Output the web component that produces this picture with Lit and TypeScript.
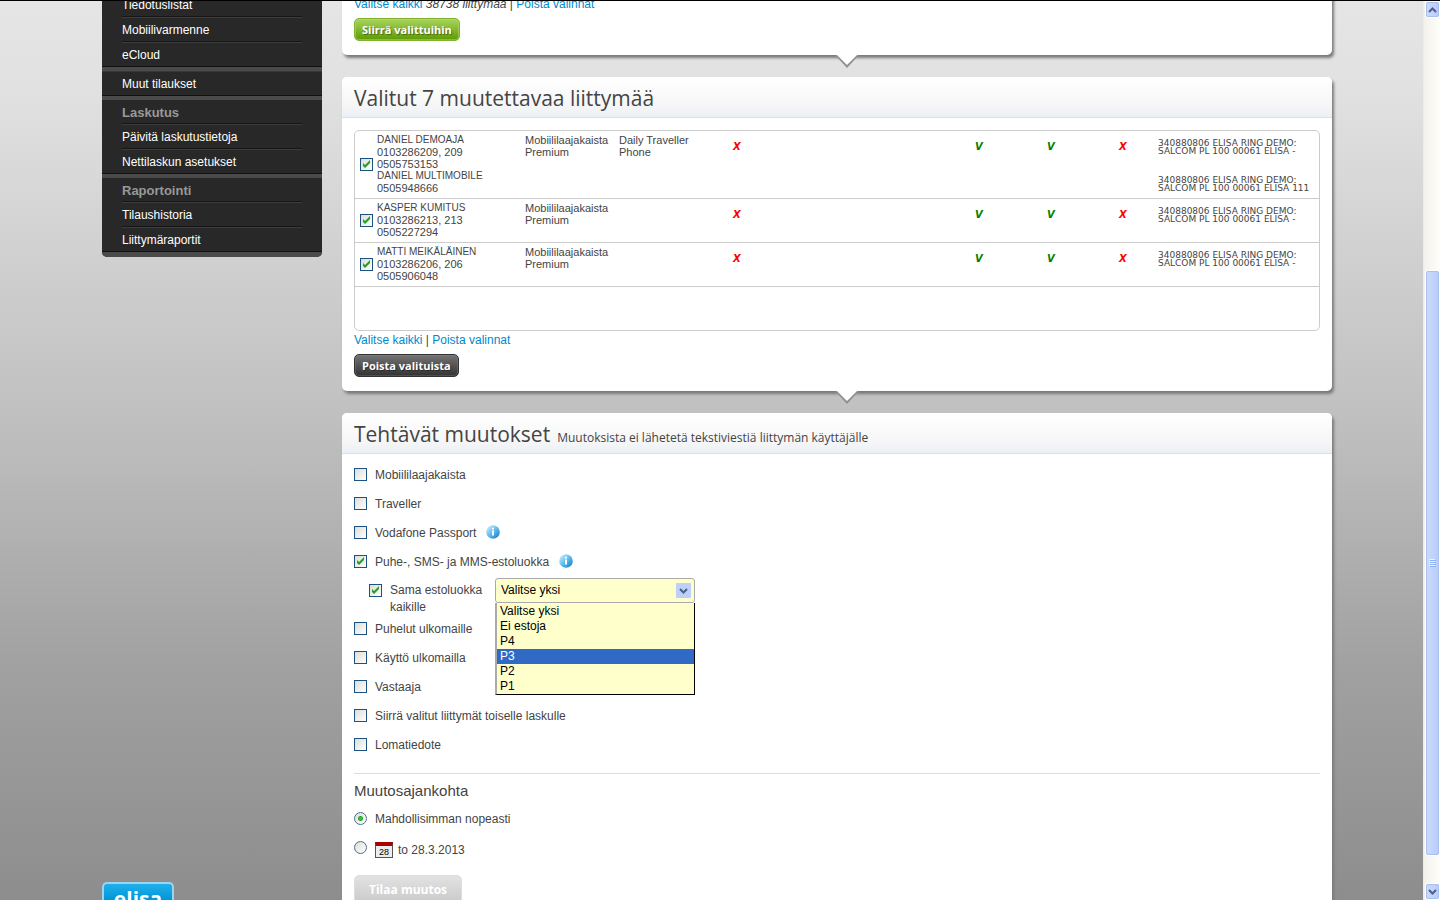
import { LitElement, html, css, svg } from "lit";
import { customElement, property, state } from "lit/decorators.js";
import { classMap } from "lit/directives/class-map.js";

interface NavGroup {
  title?: string;
  items: string[];
}

interface Account {
  lines: { text: string; name?: boolean }[];
  plan: string[];
  extra: string[];
  flags: boolean[];
  billing: string[][];
}

const NAV: NavGroup[] = [
  { items: ["Tiedotuslistat", "Mobiilivarmenne", "eCloud"] },
  { items: ["Muut tilaukset"] },
  { title: "Laskutus", items: ["Päivitä laskutustietoja", "Nettilaskun asetukset"] },
  { title: "Raportointi", items: ["Tilaushistoria", "Liittymäraportit"] },
];

const BILL = ["340880806 ELISA RING DEMO:", "SALCOM PL 100 00061 ELISA -"];

const ACCOUNTS: Account[] = [
  {
    lines: [
      { text: "DANIEL DEMOAJA", name: true },
      { text: "0103286209, 209" },
      { text: "0505753153" },
      { text: "DANIEL MULTIMOBILE", name: true },
      { text: "0505948666" },
    ],
    plan: ["Mobiililaajakaista", "Premium"],
    extra: ["Daily Traveller", "Phone"],
    flags: [false, true, true, false],
    billing: [BILL, ["340880806 ELISA RING DEMO:", "SALCOM PL 100 00061 ELISA 111"]],
  },
  {
    lines: [{ text: "KASPER KUMITUS", name: true }, { text: "0103286213, 213" }, { text: "0505227294" }],
    plan: ["Mobiililaajakaista", "Premium"],
    extra: [],
    flags: [false, true, true, false],
    billing: [BILL],
  },
  {
    lines: [{ text: "MATTI MEIKÄLÄINEN", name: true }, { text: "0103286206, 206" }, { text: "0505906048" }],
    plan: ["Mobiililaajakaista", "Premium"],
    extra: [],
    flags: [false, true, true, false],
    billing: [BILL],
  },
];

const LEVELS = ["Valitse yksi", "Ei estoja", "P4", "P3", "P2", "P1"];

const controls = css`
  * {
    box-sizing: border-box;
  }
  a {
    color: #0088cc;
    text-decoration: none;
  }
  input {
    appearance: none;
    flex: none;
    width: 13px;
    height: 13px;
    margin: 0;
    border: 1px solid #1c5180;
    background: linear-gradient(135deg, #dcdcd7, #ffffff);
  }
  input[type="checkbox"]:checked {
    background:
      url("data:image/svg+xml,%3Csvg xmlns='http://www.w3.org/2000/svg' viewBox='0 0 11 11'%3E%3Cpath d='M2 4v3l2 2 5-5V1L4 6z' fill='%2321a121'/%3E%3C/svg%3E"),
      linear-gradient(135deg, #dcdcd7, #ffffff);
  }
  input[type="radio"] {
    border-color: #4a7096;
    border-radius: 50%;
  }
  input[type="radio"]:checked {
    background: radial-gradient(circle, #3cc33c 0 1px, #21a121 2px, transparent 3px),
      linear-gradient(135deg, #dcdcd7, #ffffff);
  }
`;

@customElement("side-nav")
class SideNav extends LitElement {
  static styles = css`
    * {
      box-sizing: border-box;
    }
    :host {
      display: block;
      font: 12px/22px "Liberation Sans", Arial, sans-serif;
    }
    nav {
      overflow: hidden;
      border-radius: 0 0 5px 5px;
      background: #282828;
    }
    .group {
      padding: 0 20px 1px;
      border-bottom: 4px solid #4a4a4a;
      box-shadow: inset 0 -1px #111;
    }
    .group:last-child {
      border-bottom-width: 5px;
    }
    .single {
      border-top: 1px solid #383838;
    }
    .row {
      display: block;
      height: 23px;
      margin: 0;
      padding-top: 1px;
      color: #fff;
      text-decoration: none;
    }
    .row + .row {
      height: 25px;
      padding-top: 2px;
      border-top: 1px solid #161616;
      box-shadow: inset 0 1px #3c3c3c;
    }
    .title {
      color: #999;
      font-size: 13px;
      font-weight: bold;
      padding-top: 2px;
    }
  `;

  render() {
    return html`<nav aria-label="Valikko">
      ${NAV.map(
        (g) => html`<div class=${classMap({ group: true, single: !g.title && g.items.length === 1 })}>
          ${g.title ? html`<h3 class="row title">${g.title}</h3>` : ""}
          ${g.items.map((i) => html`<a class="row" href="#">${i}</a>`)}
        </div>`
      )}
    </nav>`;
  }
}

@customElement("info-icon")
class InfoIcon extends LitElement {
  static styles = css`
    :host {
      display: block;
      width: 14px;
      height: 14px;
    }
    svg {
      display: block;
    }
  `;
  render() {
    return html`<svg width="14" height="14" viewBox="0 0 14 14" role="img" aria-label="Lisätietoja">
      <defs>
        <linearGradient id="g" x1="0" y1="0" x2="1" y2="1">
          <stop offset="0" stop-color="#e2f4ff" />
          <stop offset="0.45" stop-color="#6cc1f0" />
          <stop offset="1" stop-color="#0877c4" />
        </linearGradient>
      </defs>
      <circle cx="7" cy="7" r="6.8" fill="url(#g)" />
      <path d="M6 2.800h2v1.800H6zM6 5.600h2v5H6z" fill="#fff" />
    </svg>`;
  }
}

@customElement("scroll-rail")
class ScrollRail extends LitElement {
  static styles = css`
    :host {
      display: flex;
      flex-direction: column;
      width: 17px;
      padding-left: 1px;
      border-left: 1px solid #eeede5;
      background: linear-gradient(90deg, #f3f1ec, #fefefb);
      box-sizing: border-box;
    }
    button,
    .thumb {
      box-sizing: border-box;
      width: 15px;
      padding: 0;
      border: 1px solid #fff;
      border-radius: 3px;
      outline: 1px solid #a9bfee;
      outline-offset: -2px;
      background: linear-gradient(90deg, #cbdaff, #b8ccfb);
    }
    button {
      height: 17px;
      display: grid;
      place-items: center;
    }
    .before {
      flex: 253;
    }
    .thumb {
      flex: 586;
      display: grid;
      place-items: center;
    }
    .after {
      flex: 27;
    }
    svg {
      display: block;
    }
  `;
  private arrow(up: boolean, label: string) {
    return html`<button aria-label=${label}>
      <svg width="9" height="6" viewBox="0 0 9 6">
        ${up
          ? svg`<path d="M1 5l3.500-3.500L8 5" fill="none" stroke="#4d6185" stroke-width="2" />`
          : svg`<path d="M1 1l3.500 3.500L8 1" fill="none" stroke="#4d6185" stroke-width="2" />`}
      </svg>
    </button>`;
  }
  render() {
    return html`${this.arrow(true, "Ylös")}
      <div class="before"></div>
      <div class="thumb">
        <svg width="7" height="8" viewBox="0 0 7 8">
          <path d="M0 .5h6M0 2.500h6M0 4.500h6M0 6.500h6" stroke="#eef4fe" />
          <path d="M1 1.500h6M1 3.500h6M1 5.500h6M1 7.500h6" stroke="#8cb0f8" />
        </svg>
      </div>
      <div class="after"></div>
      ${this.arrow(false, "Alas")}`;
  }
}

@customElement("content-panel")
class ContentPanel extends LitElement {
  @property() heading = "";
  @property() note = "";
  @property({ type: Boolean }) pointer = false;

  static styles = css`
    * {
      box-sizing: border-box;
    }
    :host {
      display: block;
      position: relative;
      border-radius: 5px;
      background: #fff;
      box-shadow: 2px 3px 3px #7a7a7a;
    }
    header {
      display: flex;
      align-items: baseline;
      gap: 7px;
      height: 41px;
      padding: 0 12px;
      border-bottom: 1px solid #dcdfe3;
      border-radius: 5px 5px 0 0;
      background: linear-gradient(#ffffff, #f6f6f7 70%, #ebf0f6);
      font-family: "Open Sans", "Noto Sans", sans-serif;
      line-height: 42px;
      color: #444;
    }
    h2 {
      margin: 0;
      font-size: 21px;
      font-weight: 400;
      line-height: 42px;
    }
    .note {
      font-size: 12px;
    }
    .body {
      padding: 12px 12px 14px;
    }
    .tip {
      position: absolute;
      top: 100%;
      left: 51%;
      display: block;
      transform: translateX(-50%);
    }
  `;

  render() {
    return html`${this.heading
        ? html`<header>
            <h2>${this.heading}</h2>
            ${this.note ? html`<span class="note">${this.note}</span>` : ""}
          </header>`
        : ""}
      <div class="body"><slot></slot></div>
      ${this.pointer
        ? html`<svg class="tip" width="26" height="14" viewBox="0 0 26 14" aria-hidden="true">
            <path d="M1 0h24L13 13z" fill="#909090" />
            <path d="M3 0h20L13 10z" fill="#fff" />
          </svg>`
        : ""}`;
  }
}

@customElement("account-table")
class AccountTable extends LitElement {
  static styles = [
    controls,
    css`
      :host {
        display: block;
        border: 1px solid #ccc;
        border-radius: 5px;
        font: 11px/12px "Liberation Sans", Arial, sans-serif;
        color: #444;
        overflow: hidden;
      }
      table {
        width: 100%;
        border-collapse: separate;
        border-spacing: 0;
        table-layout: fixed;
      }
      td {
        height: 44px;
        padding: 3px 0 4px;
        border-bottom: 1px solid #ccc;
        vertical-align: top;
      }
      tr:last-child td {
        height: 43px;
        border-bottom: 0;
      }
      .pick {
        width: 22px;
        padding-left: 5px;
        vertical-align: middle;
      }
      .pick input {
        display: block;
      }
      .who {
        width: 148px;
      }
      .plan {
        width: 94px;
      }
      .extra {
        width: 114px;
      }
      .flag {
        width: 72px;
        padding-top: 10px;
        font: italic bold 10px/12px "DejaVu Sans", Verdana, sans-serif;
        color: #008000;
      }
      .no {
        color: #f00;
      }
      .wide {
        width: 242px;
      }
      .narrow {
        width: 39px;
      }
      .line {
        display: block;
        white-space: nowrap;
      }
      .name {
        font-size: 10px;
      }
      .bill {
        padding-top: 8px;
        font: 9px/8px "DejaVu Sans", Verdana, sans-serif;
      }
      .block + .block {
        margin-top: 21px;
      }
    `,
  ];

  render() {
    const widths = ["wide", "", "", "narrow"];
    const line = (t: string) => html`<span class="line">${t}</span>`;
    return html`<table aria-label="Valitut liittymät">
      <tbody>
        ${ACCOUNTS.map(
          (a) => html`<tr>
            <td class="pick"><input type="checkbox" checked aria-label=${a.lines[0].text} /></td>
            <td class="who">
              ${a.lines.map((l) => html`<span class=${classMap({ line: true, name: !!l.name })}>${l.text}</span>`)}
            </td>
            <td class="plan">${a.plan.map(line)}</td>
            <td class="extra">${a.extra.map(line)}</td>
            ${a.flags.map((f, i) => html`<td class="flag ${widths[i]} ${f ? "" : "no"}">${f ? "V" : "X"}</td>`)}
            <td class="bill">${a.billing.map((b) => html`<div class="block">${b.map(line)}</div>`)}</td>
          </tr>`
        )}
        <tr>
          <td colspan="9"></td>
        </tr>
      </tbody>
    </table>`;
  }
}

@customElement("app-root")
class AppRoot extends LitElement {
  @state() private active = "P3";

  static styles = [
    controls,
    css`
      :host {
        display: flex;
        height: 100vh;
        border-top: 1px solid #000;
        box-sizing: border-box;
        overflow: hidden;
        font: 12px/18px "Liberation Sans", Arial, sans-serif;
        color: #444;
      }
      .page {
        flex: 1;
        min-width: 0;
        overflow: hidden;
        background: linear-gradient(#e6e5e6, #e2e1e2 10%, #c0c0c0 46%, #a0a0a0 75%, #8d8d8d);
      }
      .wrap {
        display: flex;
        gap: 20px;
        height: 100%;
        max-width: 1241px;
        margin: 0 auto;
        padding-left: 11px;
      }
      .side {
        display: flex;
        flex-direction: column;
        justify-content: space-between;
        flex: 0 0 220px;
      }
      side-nav {
        margin-top: -8px;
      }
      .logo {
        display: block;
        overflow: hidden;
        width: 72px;
        height: 18px;
        border: 2px solid #9bd3f0;
        border-bottom: 0;
        border-radius: 5px 5px 0 0;
        background: linear-gradient(#1fb0ea, #0294da);
        color: #fff;
        font: bold 21px/31px "Open Sans", sans-serif;
        text-align: center;
      }
      main {
        display: flex;
        flex: 1;
        flex-direction: column;
        gap: 22px;
        min-width: 0;
        margin-top: -18px;
      }
      p {
        margin: 0;
      }
      button {
        display: block;
        height: 23px;
        margin-top: 5px;
        padding: 0 7px;
        border: 1px solid #7fb52c;
        border-radius: 5px;
        background: linear-gradient(#aad55c, #5f9a04);
        box-shadow: inset 0 0 0 1px #b3d97388;
        color: #fff;
        font: bold 11px/20px "Open Sans", "Liberation Sans", sans-serif;
        text-shadow: 1px 1px 1px #0006;
      }
      .dark {
        border-color: #333;
        background: linear-gradient(#747474, #333);
        box-shadow: inset 0 0 0 1px #8885;
      }
      .muted {
        height: 29px;
        margin-top: 13px;
        padding: 0 14px;
        border-color: #ddd;
        background: linear-gradient(#e2e2e2, #cacaca);
        box-shadow: none;
        font-size: 12px;
        text-shadow: none;
      }
      .option {
        display: flex;
        align-items: center;
        height: 29px;
      }
      .option label {
        padding-left: 8px;
      }
      .option info-icon {
        margin: -2px 0 0 10px;
      }
      .sub {
        align-items: flex-start;
        height: 38px;
        padding-left: 15px;
        line-height: 17px;
      }
      .sub input {
        margin-top: 8px;
      }
      .sub label {
        width: 113px;
        padding-top: 6px;
      }
      .combo {
        position: relative;
        width: 200px;
        margin-top: 2px;
        color: #000;
      }
      select {
        display: block;
        appearance: none;
        width: 100%;
        height: 25px;
        padding: 0 5px;
        border: 1px solid #aaa;
        border-radius: 3px;
        background:
          url("data:image/svg+xml,%3Csvg xmlns='http://www.w3.org/2000/svg' viewBox='0 0 15 15'%3E%3Crect width='15' height='15' rx='1' fill='%23bdd0fb'/%3E%3Cpath d='M4 6l3.500 3.500L11 6' fill='none' stroke='%234d6185' stroke-width='2'/%3E%3C/svg%3E")
            right 3px center / 15px no-repeat,
          #ffffcc;
        color: #000;
        font: inherit;
      }
      .list {
        position: absolute;
        z-index: 1;
        top: 100%;
        left: 0;
        right: 0;
        margin: 0;
        padding: 1px 0 0;
        border: 1px solid #000;
        border-top: 0;
        border-left: 2px solid #aaa;
        background: #ffffcc;
        list-style: none;
        line-height: 15px;
      }
      .list li {
        padding-left: 3px;
      }
      .list .active {
        background: #316ac5;
        color: #fff;
      }
      .changes {
        margin-top: -6px;
        padding-bottom: 14px;
        border-bottom: 1px solid #ddd;
      }
      h3 {
        margin: 7px 0 3px;
        font-size: 15px;
        font-weight: 400;
        line-height: 20px;
      }
      .date {
        align-items: center;
        height: 29px;
      }
      .date label {
        display: flex;
        align-items: center;
        gap: 5px;
        padding-top: 4px;
      }
      .cal {
        width: 18px;
        height: 16px;
        border: 1px solid #555;
        border-top: 4px solid #a00;
        background: #eee;
        color: #000;
        font-size: 9px;
        line-height: 12px;
        text-align: center;
      }
    `,
  ];

  private option(id: string, label: string, checked = false, info = false) {
    return html`<div class="option">
      <input type="checkbox" id=${id} ?checked=${checked} /><label for=${id}>${label}</label>
      ${info ? html`<info-icon></info-icon>` : ""}
    </div>`;
  }

  render() {
    return html`<div class="page">
        <div class="wrap">
          <div class="side">
            <side-nav></side-nav>
            <a class="logo" href="#">elisa</a>
          </div>
          <main>
            <content-panel pointer>
              <p><a href="#">Valitse kaikki</a> <i>38738 liittymää</i> | <a href="#">Poista valinnat</a></p>
              <button>Siirrä valittuihin</button>
            </content-panel>
            <content-panel pointer heading="Valitut 7 muutettavaa liittymää">
              <account-table></account-table>
              <p><a href="#">Valitse kaikki</a> | <a href="#">Poista valinnat</a></p>
              <button class="dark">Poista valituista</button>
            </content-panel>
            <content-panel
              heading="Tehtävät muutokset"
              note="Muutoksista ei lähetetä tekstiviestiä liittymän käyttäjälle"
            >
              <div class="changes">
                ${this.option("mobile", "Mobiililaajakaista")} ${this.option("traveller", "Traveller")}
                ${this.option("passport", "Vodafone Passport", false, true)}
                ${this.option("barring", "Puhe-, SMS- ja MMS-estoluokka", true, true)}
                <div class="option sub">
                  <input type="checkbox" id="same" checked /><label for="same">Sama estoluokka kaikille</label>
                  <div class="combo">
                    <select aria-label="Estoluokka">
                      ${LEVELS.map((l) => html`<option>${l}</option>`)}
                    </select>
                    <ul class="list" role="listbox">
                      ${LEVELS.map(
                        (l) => html`<li
                          role="option"
                          class=${classMap({ active: l === this.active })}
                          @mouseenter=${() => (this.active = l)}
                        >
                          ${l}
                        </li>`
                      )}
                    </ul>
                  </div>
                </div>
                ${this.option("abroad", "Puhelut ulkomaille")} ${this.option("roaming", "Käyttö ulkomailla")}
                ${this.option("voicemail", "Vastaaja")} ${this.option("move", "Siirrä valitut liittymät toiselle laskulle")}
                ${this.option("holiday", "Lomatiedote")}
              </div>
              <h3>Muutosajankohta</h3>
              <div class="option">
                <input type="radio" name="when" id="asap" checked /><label for="asap">Mahdollisimman nopeasti</label>
              </div>
              <div class="option date">
                <input type="radio" name="when" id="date" />
                <label for="date"><span class="cal">28</span>to 28.3.2013</label>
              </div>
              <button class="muted" disabled>Tilaa muutos</button>
            </content-panel>
          </main>
        </div>
      </div>
      <scroll-rail></scroll-rail>`;
  }
}
